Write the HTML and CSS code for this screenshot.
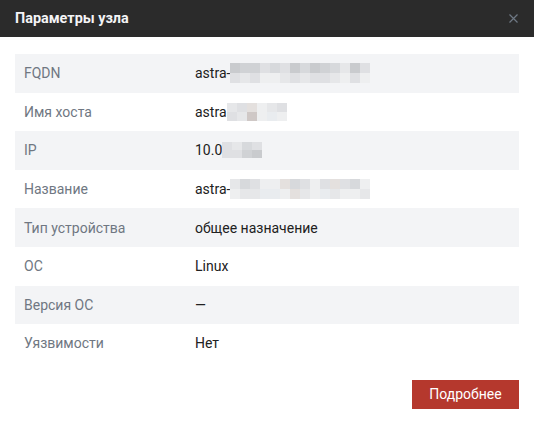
FILE: index.html
```html
<!DOCTYPE html>
<html lang="ru">
<head>
<meta charset="utf-8">
<title>Параметры узла</title>
<link rel="stylesheet" href="styles.css">
</head>
<body>
<div class="modal">
  <div class="header">
    <span class="title">Параметры узла</span>
    <span class="close">
      <svg width="9" height="9" viewBox="0 0 9 9"><path d="M0.5 0.5L8.5 8.5M8.5 0.5L0.5 8.5" stroke="#6e7884" stroke-width="1.2" fill="none"/></svg>
    </span>
  </div>
  <div class="body">
    <div class="table">
      <div class="row alt">
        <div class="label">FQDN</div>
        <div class="value">astra-<span class="blur w14"><i class="a"></i><i class="b"></i><i class="b"></i><i class="d"></i><i class="c"></i><i class="d"></i><i class="a"></i><i class="c"></i><i class="a"></i><i class="b"></i><i class="c"></i><i class="e"></i><i class="a"></i><i class="d"></i><i class="d"></i><i class="e"></i><i class="d"></i><i class="f"></i><i class="f"></i><i class="e"></i><i class="d"></i><i class="e"></i><i class="d"></i><i class="d"></i><i class="e"></i><i class="f"></i><i class="d"></i><i class="f"></i></span></div>
      </div>
      <div class="row">
        <div class="label">Имя хоста</div>
        <div class="value">astra<span class="blur w6"><i class="e"></i><i class="d"></i><i class="g"></i><i class="f"></i><i class="e"></i><i class="d"></i><i class="d"></i><i class="e"></i><i class="h"></i><i class="f"></i><i class="k"></i><i class="f"></i></span></div>
      </div>
      <div class="row alt">
        <div class="label">IP</div>
        <div class="value">10.0<span class="blur w4"><i class="d"></i><i class="e"></i><i class="c"></i><i class="d"></i><i class="d"></i><i class="d"></i><i class="b"></i><i class="a"></i></span></div>
      </div>
      <div class="row">
        <div class="label">Название</div>
        <div class="value">astra-<span class="blur w14"><i class="e"></i><i class="c"></i><i class="d"></i><i class="f"></i><i class="f"></i><i class="g"></i><i class="c"></i><i class="d"></i><i class="f"></i><i class="d"></i><i class="g"></i><i class="d"></i><i class="c"></i><i class="f"></i><i class="f"></i><i class="e"></i><i class="e"></i><i class="k"></i><i class="k"></i><i class="f"></i><i class="g"></i><i class="e"></i><i class="f"></i><i class="k"></i><i class="e"></i><i class="f"></i><i class="f"></i><i class="e"></i></span></div>
      </div>
      <div class="row alt">
        <div class="label">Тип устройства</div>
        <div class="value">общее назначение</div>
      </div>
      <div class="row">
        <div class="label">ОС</div>
        <div class="value">Linux</div>
      </div>
      <div class="row alt">
        <div class="label">Версия ОС</div>
        <div class="value">—</div>
      </div>
      <div class="row">
        <div class="label">Уязвимости</div>
        <div class="value">Нет</div>
      </div>
    </div>
    <div class="footer">
      <button class="btn">Подробнее</button>
    </div>
  </div>
</div>
</body>
</html>
```

FILE: styles.css
```css
html, body {
  margin: 0;
  padding: 0;
  background: #ffffff;
}
body {
  font-family: Roboto, "Liberation Sans", Arial, sans-serif;
  width: 534px;
  height: 424px;
  overflow: hidden;
}
.modal {
  display: flex;
  flex-direction: column;
  width: 534px;
  height: 424px;
}
.header {
  height: 37px;
  background: #2b2b2b;
  display: flex;
  align-items: center;
  justify-content: space-between;
  padding: 0 16px 0 15px;
}
.title {
  color: #f4f4f6;
  font-size: 14.4px;
  font-weight: 700;
}
.close {
  display: flex;
  align-items: center;
}
.body {
  padding: 17px 15px 0 15px;
}
.table {
  display: flex;
  flex-direction: column;
}
.row {
  display: flex;
  align-items: center;
  height: 38.6px;
  font-size: 14px;
}
.row.alt {
  background: #f3f4f6;
}
.label {
  width: 171px;
  padding-left: 9px;
  color: #6f7782;
  box-sizing: content-box;
}
.value {
  color: #212121;
  display: flex;
  align-items: center;
}
.blur {
  display: inline-grid;
  grid-template-rows: 10px 10px;
  grid-auto-flow: row;
}
.blur.w14 { grid-template-columns: repeat(14, 10px); }
.blur.w6 { grid-template-columns: repeat(6, 10px); grid-template-rows: 9px 9px; }
.blur.w4 { grid-template-columns: repeat(4, 10px); grid-template-rows: 8px 8px; }
.blur i { display: block; }
.blur .a { background: #c9cbce; }
.blur .b { background: #d0d2d5; }
.blur .c { background: #d7d9dc; }
.blur .d { background: #dfe0e3; }
.blur .e { background: #e6e7e9; }
.blur .f { background: #eeeff0; }
.blur .g { background: #e4e0de; }
.blur .h { background: #cfc8c6; }
.blur .k { background: #e9ecef; }
.footer {
  display: flex;
  justify-content: flex-end;
  margin-top: 17px;
}
.btn {
  width: 107px;
  height: 29px;
  background: #b5382d;
  border: none;
  color: #ffffff;
  font-family: Roboto, "Liberation Sans", Arial, sans-serif;
  font-size: 14px;
  padding: 0;
}
```
